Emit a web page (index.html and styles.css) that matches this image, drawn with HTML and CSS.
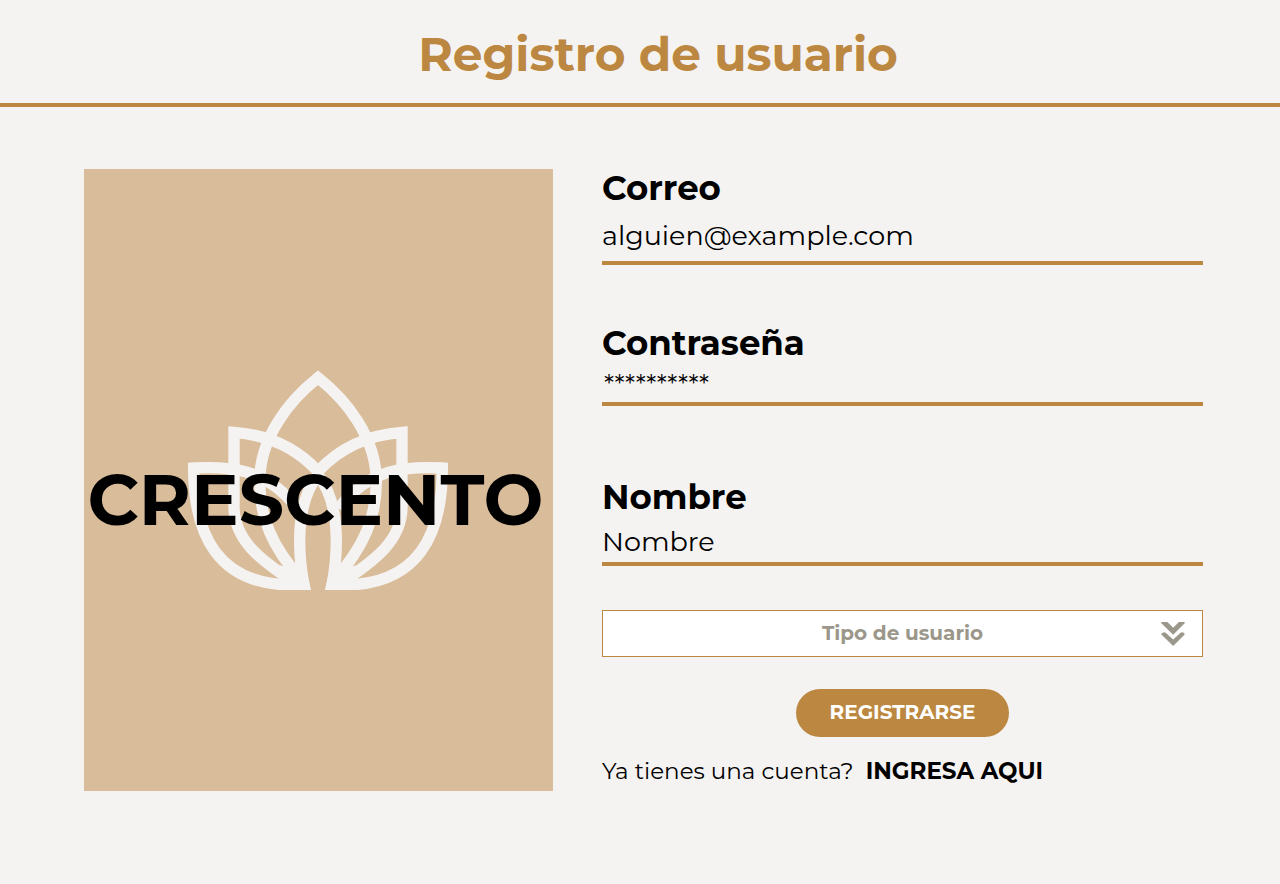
FILE: index.html
```html
<!DOCTYPE html>
<html lang="es">
<head>
<meta charset="utf-8">
<meta name="viewport" content="width=device-width, initial-scale=1">
<title>Registro de usuario</title>
<link rel="stylesheet" href="styles.css">
</head>
<body>
<header class="page-header">
  <h1 class="page-title">Registro de usuario</h1>
</header>
<main class="content">
  <section class="brand">
    <svg class="brand-lotus" viewBox="24 30 780 662" aria-hidden="true">
      <defs>
        <g id="half">
          <path d="M414 334C350 265 270 225 162 217V440C162 540 240 600 350 672"/>
          <path d="M414 334V345C370 400 359 480 359 545C359 600 366 645 373 680"/>
          <path d="M352 445C260 325 150 318 41 324C41 520 110 680 350 675"/>
          <path class="lotus-base" d="M297 653L301 616L318 622L345 612L372 600Q381 645 394 692L340 692Z"/>
        </g>
      </defs>
      <path d="M365 660C275 560 239 470 239 365C239 230 330 120 414 53C498 120 589 230 589 365C589 470 553 560 463 660"/>
      <use href="#half"/>
      <use href="#half" transform="translate(828 0) scale(-1 1)"/>
    </svg>
    <p class="brand-name">CRESCENTO</p>
  </section>
  <form class="form">
    <div class="field field-email">
      <label class="field-label" for="email">Correo</label>
      <input class="field-input" id="email" type="email" placeholder="alguien@example.com">
    </div>
    <div class="field field-password">
      <label class="field-label" for="password">Contraseña</label>
      <input class="field-input" id="password" type="password" placeholder="**********">
    </div>
    <div class="field field-name">
      <label class="field-label" for="name">Nombre</label>
      <input class="field-input" id="name" type="text" placeholder="Nombre">
    </div>
    <div class="type">
      <select class="type-select" aria-label="Tipo de usuario">
        <option>Tipo de usuario</option>
      </select>
      <svg class="type-icon" viewBox="183 66 69 71" aria-hidden="true">
        <path d="M183 66H201L218 83L235 66H252V70L218 104L183 70Z"/>
        <path d="M183 101Q189 94 196 98L218 118L240 98Q247 94 252 101V103L218 137L183 103Z"/>
      </svg>
    </div>
    <button class="submit" type="submit">REGISTRARSE</button>
    <p class="login">Ya tienes una cuenta? <a class="login-link" href="#">INGRESA AQUI</a></p>
  </form>
</main>
</body>
</html>
```

FILE: styles.css
```css
:root {
  --gold: #bc8841;
  --sand: #d9bc9a;
  --paper: #f5f3f2;
  --muted: #9b978a;
}

* {
  box-sizing: border-box;
}

body {
  margin: 0;
  background: var(--paper);
  color: #000;
  font-family: Montserrat, Inter, sans-serif;
}

.page-header {
  padding: 25px 0 18px 36px;
  border-bottom: 4px solid var(--gold);
  text-align: center;
}

.page-title {
  margin: 0;
  color: var(--gold);
  font-size: 47px;
  line-height: 60px;
  font-weight: 700;
}

.content {
  display: grid;
  grid-template-columns: 469fr 601fr;
  gap: 49px;
  padding: 62px 77px 93px 84px;
}

.brand {
  display: grid;
  place-items: center;
  padding-right: 2px;
  background: var(--sand);
}

.brand-lotus,
.brand-name {
  grid-area: 1 / 1;
}

.brand-lotus {
  width: 260px;
  fill: none;
  stroke: var(--paper);
  stroke-width: 34;
  stroke-miterlimit: 8;
}

.lotus-base {
  fill: var(--paper);
  stroke: none;
}

.brand-name {
  z-index: 1;
  margin: 40px 4px 0 0;
  font-size: 71px;
  line-height: 80px;
  font-weight: 700;
}

.form {
  display: flex;
  flex-direction: column;
}

.field {
  display: flex;
  flex-direction: column;
}

.field-label {
  padding-bottom: 2px;
  font-size: 34px;
  line-height: 38px;
  font-weight: 700;
}

.field-input {
  width: 100%;
  height: 56px;
  padding: 0;
  border: 0;
  border-bottom: 4px solid var(--gold);
  border-radius: 0;
  background: transparent;
  color: #000;
  font: 400 27px Montserrat, Inter, sans-serif;
  outline: none;
}

.field-input::placeholder {
  color: #000;
  opacity: 1;
}

.field-password {
  margin-top: 59px;
}

.field-password .field-input {
  height: 42px;
  padding: 4px 2px 0;
  font-size: 26px;
}

.field-name {
  margin-top: 72px;
}

.field-name .field-input {
  height: 48px;
  padding-top: 2px;
}

.type {
  position: relative;
  margin-top: 44px;
}

.type-select {
  display: block;
  width: 100%;
  height: 47px;
  padding: 0 40px 2px;
  appearance: none;
  border: 1px solid var(--gold);
  border-radius: 0;
  background: #fff;
  color: var(--muted);
  font: 700 20px Montserrat, Inter, sans-serif;
  text-align: center;
  text-align-last: center;
}

.type-icon {
  position: absolute;
  top: 12px;
  right: 18px;
  width: 24px;
  height: 24px;
  fill: var(--muted);
  pointer-events: none;
}

.submit {
  align-self: center;
  height: 48px;
  margin-top: 32px;
  padding: 0 34px 2px;
  border: 0;
  border-radius: 24px;
  background: var(--gold);
  color: #fff;
  font: 700 20px Montserrat, Inter, sans-serif;
}

.login {
  margin: 20px 0 6px;
  font-size: 23px;
  line-height: 28px;
  font-weight: 400;
}

.login-link {
  margin-left: 6px;
  color: #000;
  font-weight: 700;
  text-decoration: none;
}
```
